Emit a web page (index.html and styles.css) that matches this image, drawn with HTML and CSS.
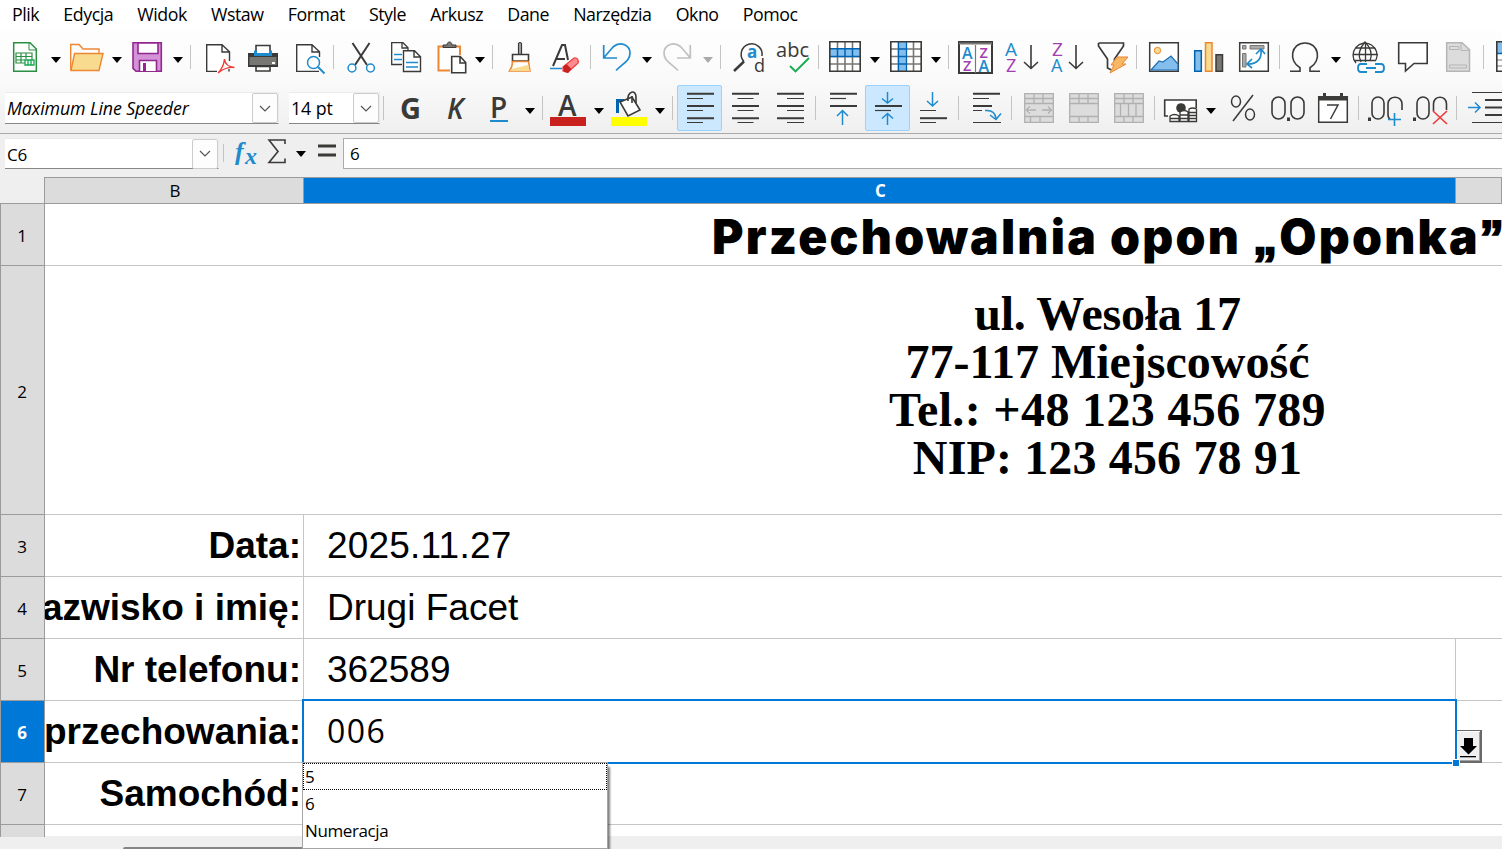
FILE: index.html
```html
<!DOCTYPE html>
<html lang="pl">
<head>
  <meta charset="UTF-8" />
  <meta name="viewport" content="width=device-width, initial-scale=1" />
  <title>Przechowalnia opon</title>
  <link rel="stylesheet" href="styles.css">
</head>
<body>

<!-- Menu -->
<nav class="menu">
  <span>Plik</span><span>Edycja</span><span>Widok</span><span>Wstaw</span><span>Format</span><span>Style</span><span>Arkusz</span><span>Dane</span><span>Narzędzia</span><span>Okno</span><span>Pomoc</span>
</nav>

<!-- Pasek standardowy -->
<div class="toolbar standard">
  <svg class="icon"><path d="M4.7 .7H21l6.300 6.300V29.300H4.700z" fill="#fff" stroke="#2b8f43" stroke-width="1.500"/><path d="M20 1v7h8" fill="none" stroke="#2b8f43"/><path d="M7 11h16v10H7zM7 14.500h16M7 18h9M12 11v10M17 11v6" fill="none" stroke="#2b8f43" stroke-width="1.200"/><path d="M16 18h9v5h-9zM19 18v5M22 18v5" fill="#fff" stroke="#12a84e" stroke-width="1.300"/></svg>
  <i class="caret"></i>
  <svg class="icon"><path d="M-.3 28V2.500H8L12 7h16v5" fill="#fdfdfd" stroke="#ed8733" stroke-width="1.400"/><path d="M3.500 11.500H32L28 28.500H0z" fill="#f8db8f" stroke="#ed8733" stroke-width="1.400"/></svg>
  <i class="caret"></i>
  <svg class="icon"><path d="M2 .7h28.300v28.600H5l-3-3z" fill="#d492d8" stroke="#92278f" stroke-width="1.600"/><path d="M7 1h20v10.500H7zM8.500 29V18.500h17V29" fill="#fff" stroke="#92278f" stroke-width="1.600"/><path d="M12 21h3v8h-3z" fill="#92278f"/></svg>
  <i class="caret"></i>
  <i class="sep"></i>
  <svg class="icon"><path d="M13 29.400H2.700V2.700H18l7.500 7V19M18 3v7h7.500M25 27v2.400" fill="#fff" stroke="#3a3a38" stroke-width="1.400"/><path d="M14 31c4-4 6-9 6.500-14 .5 5 4 8 10 8.500-6-.5-11 1-16.500 5.500z" fill="none" stroke="#ed3d3b" stroke-width="1.400"/></svg>
  <svg class="icon"><path d="M9 10V3.500h14V10" fill="#fff" stroke="#3a3a38" stroke-width="1.600"/><path d="M1 11h30v14H1z" fill="#3a3a38"/><path d="M2.500 15h27v8h-27z" fill="#797774"/><path d="M7 8.500h18V14H7z" fill="#1e8bcd"/><path d="M10 6h12v5H10z" fill="#fff"/><path d="M9 24.500h14v4.500H9z" fill="#fff" stroke="#3a3a38" stroke-width="1.600"/><path d="M25 20h3v2h-3z" fill="#fff"/></svg>
  <svg class="icon"><path d="M25 29.400H2.700V2.700H18l7.500 7V15M18 3v7h7.500" fill="#fff" stroke="#3a3a38" stroke-width="1.400"/><circle cx="19.500" cy="20.500" r="6" fill="#fff" stroke="#1e8bcd" stroke-width="1.500"/><path d="M24 25l6.500 6.500" stroke="#1e8bcd" stroke-width="2"/></svg>
  <i class="sep"></i>
  <svg class="icon"><path d="M7.500 1L22 23M24.500 1L10 23" stroke="#3a3a38" stroke-width="2"/><g fill="#fff" stroke="#1e8bcd" stroke-width="1.500"><circle cx="7" cy="26" r="3.900"/><circle cx="25.500" cy="26" r="3.900"/></g></svg>
  <svg class="icon"><path d="M12 22.500H1.700V.700H13l5 5V8M12 1v5h6" fill="#fff" stroke="#3a3a38" stroke-width="1.300"/><path d="M4 12.500h8M4 17.500h8" stroke="#1e8bcd" stroke-width="1.300"/><path d="M13.500 8.700h11l6 6v14.800h-17z M24 9v6h6.500" fill="#fff" stroke="#3a3a38" stroke-width="1.400"/><path d="M16 20.500h12M16 25h12" stroke="#1e8bcd" stroke-width="1.500"/></svg>
  <svg class="icon"><path d="M15 28.500H3.500v-24H25V13" fill="#fff" stroke="#ed8733" stroke-width="2"/><path d="M8 4.500V3h4c0-4 5-4 5 0h4v2.500H8z" fill="#797774" stroke="#3a3a38"/><path d="M16.700 14.500h8.500l5.500 6v10.300h-14z M25 15v6h5.500" fill="#fff" stroke="#3a3a38" stroke-width="1.600"/></svg>
  <i class="caret"></i>
  <i class="sep"></i>
  <svg class="icon"><path d="M14.500 12V1.500q1.500-2 3 0V12" fill="#aaa" stroke="#3a3a38" stroke-width="1.200"/><path d="M8.500 19v-6.500h16V19z" fill="#fff" stroke="#3a3a38" stroke-width="1.600"/><path d="M8.500 19.500h16L26 29H5.500q3-4 3-9.500z" fill="#fff" stroke="#ed8733" stroke-width="1.500"/><path d="M7 27l17-4 2 6H6z" fill="#f8db8f"/></svg>
  <svg class="icon"><path d="M4 24L13 3h3l3 15M7 17h9" fill="none" stroke="#3a3a38" stroke-width="2"/><path d="M1 26.500h12" stroke="#1e8bcd" stroke-width="1.500"/><path d="M14 25l11-9q3-1 4 2 1 3-1 4l-9 8-5-1z" fill="#ff8b92" stroke="#ed3d3b" stroke-width="1.200"/><path d="M14 25l3.500-3 5 5-3.500 4-4-1z" fill="#c9211e"/></svg>
  <i class="sep"></i>
  <svg class="icon"><path d="M3.700 3v13H17M4 15.500L13 5c8-7 17-1 17 6 0 7-5 9-14 17.500" fill="none" stroke="#1e8bcd" stroke-width="1.700"/></svg>
  <i class="caret"></i>
  <svg class="icon"><path d="M28.300 3v13H15M28 15.500L19 5C11-2 2 4 2 11c0 7 5 9 14 17.500" fill="none" stroke="#c0c0c0" stroke-width="1.700"/></svg>
  <i class="caret off"></i>
  <i class="sep"></i>
  <svg class="icon"><path d="M11 19.500A10.500 10.500 0 1 1 29 14" fill="none" stroke="#3a3a38" stroke-width="1.500"/><path d="M11 19.500L1 29" stroke="#3a3a38" stroke-width="2.500"/><text x="14" y="16" class="t bold blue" font-size="17">a</text><text x="21" y="30" class="t" font-size="18">d</text></svg>
  <svg class="icon"><text x="-1" y="15" class="t" font-size="20" textLength="33">abc</text><path d="M13 24l5.500 5.500L32 16" fill="none" stroke="#18ab50" stroke-width="1.900"/></svg>
  <i class="sep"></i>
  <svg class="icon"><path d="M.8-.2h30.400v29.400H.8z" fill="#fff"/><path d="M8.500 0v29M16 0v29M23.500 0v29M1 7h30M1 14.500h30M1 22h30" stroke="#797774" stroke-width="1.600"/><path d="M1 7h30v7.500H1z" fill="#83beec"/><path d="M8.500 7v7M16 7v7M23.500 7v7M0 6.800h32M0 14.500h32" stroke="#0063b1" stroke-width="1.500"/><path d="M.8-.2h30.400v29.400H.8z" fill="none" stroke="#3a3a38" stroke-width="1.600"/></svg>
  <i class="caret"></i>
  <svg class="icon"><path d="M.8-.2h30.400v29.400H.8z" fill="#fff"/><path d="M8.500 0v29M16 0v29M23.500 0v29M1 7h30M1 14.500h30M1 22h30" stroke="#797774" stroke-width="1.600"/><path d="M8.500 0H16v29H8.500z" fill="#83beec"/><path d="M8.500-1v31M16.500-1v31M8 7h8M8 14.500h8M8 22h8" stroke="#0063b1" stroke-width="1.300"/><path d="M.8-.2h30.400v29.400H.8z" fill="none" stroke="#3a3a38" stroke-width="1.600"/></svg>
  <i class="caret"></i>
  <i class="sep"></i>
  <svg class="icon"><path d="M0 0h33v31H0z" fill="#fff" stroke="#3a3a38" stroke-width="2"/><path d="M0 1.500h33" stroke="#797774" stroke-width="2"/><path d="M16.500 3v28" stroke="#797774" stroke-width="1.200"/><g class="t semi" font-size="16"><text x="3" y="17" class="blue">A</text><text x="19.500" y="29.500" class="blue">A</text></g><g class="t semi" font-size="14.500"><text x="20.500" y="15.500" class="violet">Z</text><text x="4" y="29" class="violet">Z</text></g></svg>
  <svg class="icon"><text x="-1" y="14" class="t blue" font-size="19">A</text><text x="0" y="30" class="t violet" font-size="18">Z</text><path d="M25 3v24M18 20l7 6.500 7-6.500" fill="none" stroke="#3a3a38" stroke-width="1.600"/></svg>
  <svg class="icon"><text x="1" y="14" class="t violet" font-size="19">Z</text><text x="0" y="30" class="t blue" font-size="18">A</text><path d="M25 3v24M18 20l7 6.500 7-6.500" fill="none" stroke="#3a3a38" stroke-width="1.600"/></svg>
  <svg class="icon"><path d="M1.500 1h25v3l-9 13v4M1.500 1v3l9 13v9l4 2" fill="none" stroke="#3a3a38" stroke-width="1.700"/><path d="M20 15h11l-6 7h4L13 31l4-8h-3z" fill="#f7b765" stroke="#ed8733" stroke-width="1"/></svg>
  <i class="sep"></i>
  <svg class="icon"><path d="M1.700 .700h28.600v28.600H1.700z" fill="#fff" stroke="#3a3a38" stroke-width="1.500"/><circle cx="9.500" cy="8.500" r="3.200" fill="#f8db8f" stroke="#ed8733"/><path d="M3 28l8-9 4 1 8-6 7 8v6z" fill="#83beec" stroke="#1e6fb5" stroke-width="1.200"/></svg>
  <svg class="icon"><path d="M1.700 8.700h6.600v20.600H1.700z" fill="#83beec" stroke="#0063b1" stroke-width="1.500"/><path d="M12.500 .700H19v28.600h-6.500z" fill="#f8db8f" stroke="#ed8733" stroke-width="1.500"/><path d="M23 12.700h6.500v16.600H23z" fill="#797774" stroke="#3a3a38" stroke-width="1.500"/></svg>
  <svg class="icon"><path d="M1.700 .700h28.600v28.600H1.700z" fill="#fff" stroke="#3a3a38" stroke-width="1.500"/><path d="M4.500 3.500H8v3.500H4.500zM12 3.500h14v3.500H12zM4.500 11.500H8V25H4.500z" fill="#aaa" stroke="#797774"/><path d="M10 22c9 0 14-5 13-14M18 12l5-5 4 5M14 17l-5 5 5 4" fill="none" stroke="#1e8bcd" stroke-width="1.700"/></svg>
  <i class="sep"></i>
  <svg class="icon"><path d="M1 29.200h10v-3.500C-1 19 2 1 16 1s17 18 5 24.700v3.500h10" fill="none" stroke="#3a3a38" stroke-width="1.600"/></svg>
  <i class="caret"></i>
  <svg class="icon"><g fill="none" stroke="#3a3a38" stroke-width="1.300"><path d="M3 21A12 12 0 1 1 23 18M0 12.500h25M3 6h19M2 18.500h21M12.500 0v20"/><path d="M8 20q-5-10 4-20 9 9 5 19"/></g><path d="M14 22H8q-3 0-3 4t3 4h6M22 22h6q3 0 3 4t-3 4h-6M13 26h10" fill="none" stroke="#1e8bcd" stroke-width="1.900"/></svg>
  <svg class="icon"><path d="M1.700 .800h28.500V21.500H17L8.500 29v-7.500H1.700z" fill="#fff" stroke="#3a3a38" stroke-width="1.600"/></svg>
  <svg class="icon"><path d="M4.700 .700H20l7.500 7v21.600H4.700z" fill="#dcdcdc" stroke="#b5b5b5" stroke-width="1.500"/><path d="M19 1v7.500h8M7.500 4.500H17v3H7.500zM7.500 23h17v3h-17z" fill="none" stroke="#b5b5b5"/></svg>
  <i class="sep"></i>
  <svg class="icon"><path d="M1.800-.2h30v29.400h-30z" fill="#fff"/><path d="M1.800 0h30v11h-30z" fill="#83beec"/><path d="M1 11.500h31M8.500 0v11" stroke="#0063b1" stroke-width="1.500"/><path d="M1 18h31M1 24h31" stroke="#797774"/><path d="M1.800-.2h30v29.400h-30z" fill="none" stroke="#3a3a38" stroke-width="1.600"/></svg>
</div>

<!-- Pasek formatowania -->
<div class="toolbar format">
  <div class="combo font-name"><em>Maximum Line Speeder</em><b><svg width="12" height="8"><path d="M1 1l5 5 5-5"/></svg></b></div>
  <div class="combo font-size"><span>14 pt</span><b><svg width="12" height="8"><path d="M1 1l5 5 5-5"/></svg></b></div>
  <i class="sep"></i>
  <svg class="icon"><text x="6" y="27" class="t bold" font-size="29">G</text></svg>
  <svg class="icon"><text x="7" y="26.500" class="t italic" font-size="28">K</text></svg>
  <svg class="icon"><text x="7" y="25.500" class="t semi" font-size="28">P</text><path d="M7 29h18" stroke="#1e8bcd" stroke-width="2"/></svg>
  <i class="caret"></i>
  <i class="sep"></i>
  <svg class="icon"><text x="6" y="23.500" class="t semi" font-size="28">A</text><path d="M-2 25h36v9H-2z" fill="#c9211e"/></svg>
  <i class="caret"></i>
  <svg class="icon"><path d="M4.500 21V8.500H11" fill="none" stroke="#0063b1" stroke-width="3"/><path d="M7 10l12-5 8 13-12 6z" fill="#fff" stroke="#3a3a38" stroke-width="1.600"/><path d="M15 9c-1-10 8-12 8-4v6M19 4v7" fill="none" stroke="#3a3a38" stroke-width="1.600"/><path d="M-2 25h36v9H-2z" fill="#ff0"/></svg>
  <i class="caret"></i>
  <i class="sep"></i>
  <svg class="icon on"><path class="thick" d="M3 1.800h27M3 14h27M3 26.200h27"/><path class="thin" d="M3 6.500h16M3 18.500h16M3 30.500h16"/></svg>
  <svg class="icon"><path class="thick" d="M3 1.800h27M3 14h27M3 26.200h27"/><path class="thin" d="M8.500 6.500h16M8.500 18.500h16M8.500 30.500h16"/></svg>
  <svg class="icon"><path class="thick" d="M3 1.800h27M3 14h27M3 26.200h27"/><path class="thin" d="M13 6.500h17M13 18.500h17M13 30.500h17"/></svg>
  <i class="sep"></i>
  <svg class="icon"><path class="thick" d="M3 1.800h27M3 14h27"/><path class="thin" d="M3 6.500h16"/><path class="arrow" d="M15.500 33V19M10 24l5.500-5.500L21 24"/></svg>
  <svg class="icon on"><path class="thick" d="M3 14h27"/><path class="thin" d="M3 18.500h16"/><path class="arrow" d="M15.500 0v11M10 6.500l5.500 4.500L21 6.500M15.500 33V22M10 26.500l5.500-5 5.500 5"/></svg>
  <svg class="icon"><path class="thick" d="M3 26.200h27"/><path class="thin" d="M3 18.500h16M3 30.500h16"/><path class="arrow" d="M15.500 0v14M10 9l5.500 5L21 9"/></svg>
  <i class="sep"></i>
  <svg class="icon"><path class="thick" d="M2 1.800h27M2 14h19"/><path class="thin" d="M2 6.500h16M2 18.500h9M2 30.500h28"/><path class="arrow" d="M14 18.500q10-1 11 8M19 23l6 4.500 5-6"/></svg>
  <i class="sep"></i>
  <svg class="icon gray"><path d="M1.700 1.700h28.600v28.600H1.700zM2 6.500h28M2 11.500h28M2 24.500h28M11 2v9M20 2v9M7.500 25v5M17 25v5M4 18h9M19 18h9M7 14.500L3.500 18 7 21.500M25 14.500l3.500 3.500-3.500 3.500"/></svg>
  <svg class="icon gray"><path d="M1.700 1.700h28.600v28.600H1.700zM2 6.500h28M2 11.500h28M2 24.500h28M11 2v9M20 2v9M11 25v5M20 25v5"/></svg>
  <svg class="icon gray"><path d="M1.700 1.700h28.600v28.600H1.700zM2 6.500h28M2 11.500h28M2 24.500h28M11 2v9M20 2v9M7.500 12v12M15.500 12v12M23 12v12M11 25v5M20 25v5"/></svg>
  <i class="sep"></i>
  <svg class="icon"><path d="M4 24H.700V8h31.500v8" fill="#fff" stroke="#3a3a38" stroke-width="1.600"/><circle cx="17" cy="16" r="4.800" fill="#3a3a38"/><g fill="#fff" stroke="#3a3a38" stroke-width="1.300"><path d="M6 24q4.500-3 9 0v5.500H6zM16 20q4.500-3 8 0v9.500h-8zM25 17q3.500-2 7.500 0v12.500H25z"/><path d="M6 26.500h9M16 23h8M16 26.500h8M25 20.500h8M25 23.500h8M25 26.500h8"/></g></svg>
  <i class="caret"></i>
  <svg class="icon"><g fill="none" stroke="#3a3a38" stroke-width="1.500"><ellipse cx="9" cy="9.500" rx="4.500" ry="5.500"/><ellipse cx="23" cy="22.500" rx="4.500" ry="5.500"/><path d="M26 3L6 29"/></g></svg>
  <svg class="icon"><g fill="none" stroke="#3a3a38" stroke-width="1.600"><rect x="0" y="5" width="13" height="22" rx="6.500"/><rect x="19" y="5" width="13" height="22" rx="6.500"/></g><path d="M15 25.500h3V29h-3z" fill="#3a3a38"/></svg>
  <svg class="icon"><path d="M1.700 4.700h28.600v25.600H1.700z" fill="#fff" stroke="#3a3a38" stroke-width="1.500"/><path d="M1 4h30v4.500H1zM6 1h3v4H6zM23 1h3v4h-3z" fill="#3a3a38"/><path d="M10 13h11l-7.500 14" fill="none" stroke="#3a3a38" stroke-width="1.500"/></svg>
  <i class="sep"></i>
  <svg class="icon"><path d="M1 25.500h3V29H1z" fill="#3a3a38"/><g fill="none" stroke="#3a3a38" stroke-width="1.600"><rect x="5" y="5" width="12" height="22" rx="6"/><path d="M23 27q-2-1-2-5V12c0-9 14-9 14 0v6"/></g><path d="M27.500 21v13M21 27.500h13" stroke="#1e8bcd" stroke-width="1.600"/></svg>
  <svg class="icon"><path d="M0 25.500h3V29H0z" fill="#3a3a38"/><g fill="none" stroke="#3a3a38" stroke-width="1.600"><rect x="4" y="5" width="12" height="22" rx="6"/><path d="M20.500 19v-7c0-9 13-9 13 0v6"/></g><path d="M20 19l14 13M34 19L20 32" stroke="#ed3d3b" stroke-width="1.700"/></svg>
  <i class="sep"></i>
  <svg class="icon"><path class="thin" d="M4 .5h30M4 30.500h30"/><path class="thick" d="M17 8h17M17 15.500h17M17 23h17"/><path class="arrow" d="M0 15.500h12M7 10.500l5 5-5 5"/></svg>
</div>

<!-- Pasek formuły -->
<div class="formula-bar">
  <div class="combo name-box"><span>C6</span><b><svg width="12" height="8"><path d="M1 1l5 5 5-5"/></svg></b></div>
  <i class="sep"></i>
  <svg class="fx" width="28" height="32"><text x="3" y="22" font-size="26">f</text><text x="13" y="26" font-size="24">x</text></svg>
  <svg class="sigma" width="20" height="32"><path d="M18 6V2H2l9 11.500L2 24.500h16v-4" fill="none" stroke="#3a3a38" stroke-width="1.600"/></svg>
  <i class="caret"></i>
  <svg class="equals" width="20" height="32"><path d="M1 9h18M1 18h18" stroke="#3a3a38" stroke-width="3"/></svg>
  <div class="formula">6</div>
</div>

<!-- Arkusz -->
<div class="sheet">
  <div class="corner"></div><div class="col">B</div><div class="col selected">C</div><div class="col"></div>

  <div class="row-no">1</div>
  <div class="cell merged"><div class="title">Przechowalnia opon <span class="quote">„</span>Oponka<span class="quote">”</span></div></div>

  <div class="row-no">2</div>
  <div class="cell merged"><div class="address">
    <p class="street">ul. Wesoła 17</p>
    <p class="city">77-117 Miejscowość</p>
    <p class="phone">Tel.: +48 123 456 789</p>
    <p class="nip">NIP: 123 456 78 91</p>
  </div></div>

  <div class="row-no">3</div><div class="cell label">Data:</div><div class="cell value wide date">2025.11.27</div>
  <div class="row-no">4</div><div class="cell label">azwisko i imię:</div><div class="cell value wide">Drugi Facet</div>
  <div class="row-no">5</div><div class="cell label">Nr telefonu:</div><div class="cell value">362589</div><div class="cell"></div>

  <div class="row-no selected">6</div><div class="cell label">przechowania:</div>
  <div class="cell value active">006
    <i class="handle"></i>
    <button class="dropdown"><svg width="18" height="22"><path d="M5 1h9v8h4l-8.500 8.500L1 9h4z"/><path d="M1 19h16v1.300H1z"/></svg></button>
    <ul class="list"><li class="focus">5</li><li>6</li><li>Numeracja</li></ul>
  </div>
  <div class="cell"></div>

  <div class="row-no">7</div><div class="cell label">Samochód:</div><div class="cell wide"></div>
  <div class="row-no last"></div><div class="cell label last"></div><div class="cell wide last"></div>
</div>
<div class="scrollbar"><div class="thumb"></div></div>

</body>
</html>
```
FILE: styles.css
```css
:root {
  --ui: "Open Sans", "Noto Sans", sans-serif;
  --accent: #0078d7;
  --line: #c6c6c6;
  --head: #dcdcdc;
  --head-line: #9b9b9b;
}

* {
  box-sizing: border-box;
}

body {
  margin: 0;
  width: 1502px;
  height: 849px;
  overflow: hidden;
  font-family: var(--ui);
  font-size: 17px;
  color: #000;
  background: #efefef;
}

/* Menu */
.menu {
  display: flex;
  gap: 24.1px;
  height: 30px;
  padding-left: 12px;
  font-size: 17.8px;
  line-height: 29px;
  letter-spacing: -0.45px;
  background: #fff;
}

/* Paski */
.toolbar {
  display: grid;
  align-items: start;
}

.standard {
  height: 50px;
  padding: 12px 0 0 9px;
  grid-template-columns: 42px 20px 41px 19px 42px 17px 14px 43px 47px 39px 12px 45px 45px 40px 17px 12px 45px 41px 10px 42px 20px 41px 17px 13px 44px 41px 11px 41px 20px 41px 17px 11px 47px 45px 46px 39px 12px 45px 45px 41px 10px 42px 22px 44px 45px 41px 12px 32px;
  background: linear-gradient(#fefefe, #fafafa);
}

.format {
  height: 54px;
  padding: 12px 0 0 5px;
  grid-template-columns: 284px 94px 11px 46px 43px 42px 17px 10px 42px 19px 42px 17px 12px 45px 45px 41px 12px 45px 45px 41px 13px 40px 12px 45px 45px 41px 10px 42px 21px 45px 45px 41px 9px 46px 43px 12px 34px;
  background: linear-gradient(#fafafa, #efefef);
  border-bottom: 1px solid #ababab;
}

.icon {
  width: 32px;
  height: 32px;
  overflow: visible;
}

.icon.on {
  box-sizing: content-box;
  margin: -7px;
  padding: 6px;
  width: 31px;
  height: 32px;
  background: #cce8ff;
  border: 1px solid #99d1ff;
  border-radius: 2px;
}

.t {
  font-family: var(--ui);
  fill: #3a3a38;
}
.bold { font-weight: 700; }
.semi { font-weight: 600; }
.italic { font-style: italic; font-weight: 600; }
.blue { fill: #1e8bcd; }
.violet { fill: #a33eb0; }

.thick { stroke: #3a3a38; stroke-width: 2; }
.thin { stroke: #3a3a38; stroke-width: 1.2; }
.arrow { fill: none; stroke: #1e8bcd; stroke-width: 1.5; }
.gray path { fill: #dcdcdc; stroke: #b0b0b0; stroke-width: 1.3; }

.sep {
  width: 1px;
  height: 24px;
  margin-top: 3px;
  background: #c4c4c4;
}

.format .sep {
  margin-top: 4px;
}

.caret {
  width: 0;
  height: 0;
  margin-top: 15px;
  border: 5px solid transparent;
  border-top: 6px solid #000;
  border-bottom: 0;
}

.caret.off {
  border-top-color: #ababab;
}

.format .caret {
  margin-top: 16px;
}

/* Pola z listą */
.combo {
  display: flex;
  justify-content: space-between;
  height: 32px;
  font-size: 17.8px;
  line-height: 31px;
  padding-left: 2px;
  background: #fff;
  border: 1px solid #ebebeb;
  border-left: 0;
  border-bottom-color: #868686;
  letter-spacing: -0.1px;
}

.combo b {
  width: 26px;
  height: 30px;
  line-height: 24px;
  text-align: center;
  border: 1px solid #ccc;
  border-radius: 2px;
  background: #fdfdfd;
}

.combo b path {
  fill: none;
  stroke: #555;
  stroke-width: 1.2;
}

.font-name { width: 274px; }
.font-size { width: 91px; }

.formula-bar {
  display: flex;
  height: 43px;
  padding: 4px 0 0 5px;
}

.name-box { width: 214px; margin-right: 4px; height: 31px; font-size: 17px; letter-spacing: -0.3px; }
.formula-bar .sep { margin-top: 6px; height: 18px; }
.fx { margin-left: 8px; overflow: visible; }
.fx text { font-family: "Liberation Serif", serif; font-style: italic; font-weight: 700; fill: #1e8bcd; }
.sigma { margin-left: 7px; }
.formula-bar .caret { margin: 13px 0 0 9px; }
.equals { margin: -1px 0 0 11px; }

.formula {
  flex: 1;
  height: 31px;
  margin-left: 6px;
  padding-left: 6px;
  line-height: 30px;
  background: #fff;
  border: 1px solid #ababab;
  border-right: 0;
}

/* Arkusz */
.sheet {
  display: grid;
  grid-template-columns: 45px 259px 1152px 46px;
  grid-template-rows: 27px 62px 249px repeat(5, 62px) 12px;
  height: 659px;
  background: #fff;
}

.corner {
  background: #efefef;
  border-right: 1px solid var(--head-line);
  border-bottom: 1px solid var(--head-line);
}

.col, .row-no {
  display: flex;
  align-items: center;
  justify-content: center;
  background: var(--head);
}

.col {
  padding-left: 2px;
  border: solid var(--head-line);
  border-width: 1px 1px 1px 0;
}

.row-no {
  border: solid var(--head-line);
  border-width: 0 1px 1px 1px;
  padding: 2px 1px 0 0;
}

.col.selected, .row-no.selected {
  background: var(--accent);
  color: #fff;
  font-weight: 700;
}

.row-no.last {
  border-bottom: 0;
}

.cell {
  display: flex;
  align-items: center;
  min-width: 0;
  border-bottom: 1px solid var(--line);
  font: 37px "Liberation Sans", sans-serif;
  white-space: nowrap;
}

.merged {
  grid-column: 2 / -1;
  overflow: hidden;
}

.wide {
  grid-column: 3 / -1;
}

.title {
  flex: none;
  width: 2125px;
  text-align: center;
  font: 900 48px/60px Inter, "Liberation Sans", sans-serif;
  letter-spacing: 2.25px;
  padding: 6px 0 0 3px;
}

.quote {
  font-family: "Liberation Sans", sans-serif;
  -webkit-text-stroke: 2px #000;
}

.address {
  flex: none;
  width: 2125px;
  margin-top: -8px;
  text-align: center;
  font: bold 48px/48px "Liberation Serif", serif;
}

.address p {
  margin: 0;
}

.street { letter-spacing: -0.25px; }
.phone { letter-spacing: 0.35px; }
.nip { letter-spacing: 0.15px; }

.label {
  justify-content: flex-end;
  overflow: hidden;
  padding-right: 2px;
  font-weight: bold;
  border-right: 1px solid var(--line);
}

.value {
  padding-left: 23px;
}

.value:not(.wide) {
  border-right: 1px solid var(--line);
}

.date {
  letter-spacing: 0.2px;
}

.last {
  border-bottom: 0;
}

/* Aktywna komórka z listą wyboru */
.cell.active {
  position: relative;
  padding-bottom: 3px;
  font: 500 32px var(--ui);
  letter-spacing: 1.5px;
  border: 0;
}

.active::before {
  content: "";
  position: absolute;
  inset: -2px -1px -1px -2px;
  border: 2px solid var(--accent);
}

.handle {
  position: absolute;
  right: -4px;
  bottom: -4px;
  width: 8px;
  height: 8px;
  background: var(--accent);
  border: 1px solid #fff;
  z-index: 3;
}

.dropdown {
  position: absolute;
  left: 1153px;
  top: 29px;
  width: 25px;
  height: 33px;
  padding: 3px 0 0 2px;
  line-height: 0;
  text-align: left;
  background: #f0f0f0;
  border: solid #696969;
  border-width: 1px 2px 2px 0;
  box-shadow: inset 1px 1px #fff, inset -1px -1px #a0a0a0;
  z-index: 2;
}

.list {
  position: absolute;
  left: -2px;
  top: 61px;
  width: 306px;
  height: 87px;
  margin: 0;
  padding: 0;
  list-style: none;
  font-size: 17px;
  font-weight: 400;
  letter-spacing: -0.4px;
  background: #fff;
  border: 1px solid #a5a5a5;
  box-shadow: 3px 4px 2px -1px rgba(0, 0, 0, 0.5);
  z-index: 4;
}

.list li {
  height: 27px;
  line-height: 25px;
  padding-left: 1px;
  border: 1px solid transparent;
}

.list .focus {
  border: 1px dotted #000;
}

.scrollbar {
  height: 13px;
  padding: 11px 0 0 123px;
}

.thumb {
  width: 200px;
  height: 8px;
  background: #858585;
  border-radius: 2px;
}
```
